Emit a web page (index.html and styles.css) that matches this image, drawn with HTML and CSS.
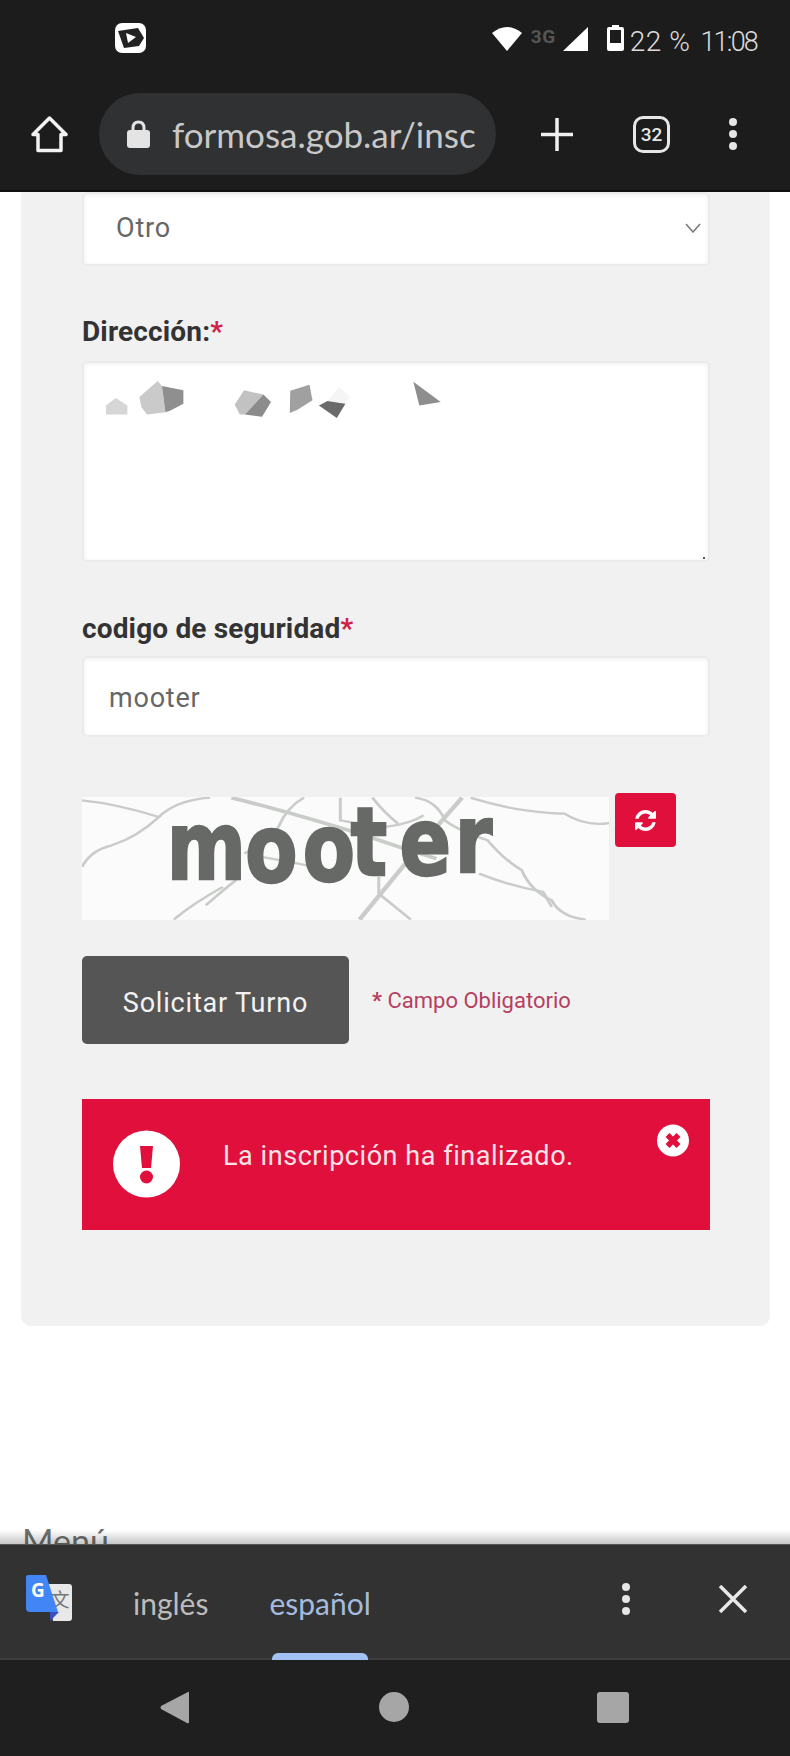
FILE: index.html
```html
<!DOCTYPE html>
<html lang="es">
<head>
    <meta charset="UTF-8">
    <meta name="viewport" content="width=device-width, initial-scale=1.0">
    <title>Solicitar Turno</title>
    <link rel="stylesheet" href="styles.css">
</head>
<body>
    <div class="phone">
        <header class="topbar">
            <div class="status-row">
                <svg class="app-icon" width="31" height="30" viewBox="0 0 31 30">
                    <rect width="31" height="30" rx="7" fill="#fff"/>
                    <path d="M3 8 L23 5 L29 15 L24 23 L9 25 Z" fill="#222"/>
                    <path d="M11 10 L21 14 L13 20 Z" fill="#fff"/>
                </svg>
                <div class="status-right">
                    <svg class="wifi" width="30" height="24" viewBox="0 0 30 24"><path d="M0 6 Q15 -6 30 6 L15 24 Z" fill="#fff"/></svg>
                    <span class="net">3G</span>
                    <svg class="signal" width="25" height="24" viewBox="0 0 25 24"><path d="M0 24 L25 0 V24 Z" fill="#fff"/></svg>
                    <svg class="battery" width="17" height="26" viewBox="0 0 17 26">
                        <path d="M5 0 H12 V2 H15 Q17 2 17 4 V24 Q17 26 15 26 H2 Q0 26 0 24 V4 Q0 2 2 2 H5 Z" fill="#fff"/>
                        <rect x="3" y="5" width="11" height="13" fill="#1c1c1c"/>
                    </svg>
                    <span class="status-text">22 %</span>
                    <span class="status-text clock">11:08</span>
                </div>
            </div>
            <div class="url-row">
                <svg class="home" width="37" height="37" viewBox="0 0 37 37">
                    <path d="M18.500 2 L35 18.500 H30 V34.500 H7 V18.500 H2 Z" fill="none" stroke="#f2f2f2" stroke-width="3.500" stroke-linejoin="round"/>
                </svg>
                <div class="url-pill">
                    <svg width="23" height="28" viewBox="0 0 23 28">
                        <path d="M6 12 V8 Q6 2 11.500 2 Q17 2 17 8 V12" fill="none" stroke="#e4e4e4" stroke-width="3"/>
                        <rect y="10" width="23" height="18" rx="3" fill="#e4e4e4"/>
                    </svg>
                    <span class="url-text">formosa.gob.ar/insc</span>
                </div>
                <svg class="plus" width="32" height="33" viewBox="0 0 32 33">
                    <path d="M16 0 V33 M0 16.500 H32" stroke="#f0f0f0" stroke-width="3.500"/>
                </svg>
                <div class="tabs-count">32</div>
                <div class="dots">
                    <span></span><span></span><span></span>
                </div>
            </div>
        </header>

        <main class="page">
            <section class="panel">
                <div class="field-box select-box">
                    <span>Otro</span>
                    <svg width="16" height="10" viewBox="0 0 16 10"><path d="M1 1 L8 9 L15 1" fill="none" stroke="#777" stroke-width="1.500"/></svg>
                </div>

                <div class="field-label label-address">Dirección:<span class="req">*</span></div>
                <div class="field-box textarea-box">
                    <!-- blotches over the address in the screenshot -->
                    <svg width="342" height="39" viewBox="100 240 800 115" preserveAspectRatio="none">
                        <polygon points="107,342 107,315 130,293 157,315 157,342" fill="#d6d6d6"/>
                        <polygon points="185,290 228,243 238,258 246,335 203,342 190,320" fill="#cacaca"/>
                        <polygon points="238,258 288,270 288,310 258,330 246,335" fill="#8f8f8f"/>
                        <polygon points="430,270 475,283 432,342 420,342 408,312" fill="#c2c2c2"/>
                        <polygon points="475,283 493,305 472,348 432,342" fill="#8c8c8c"/>
                        <polygon points="538,272 583,254 590,300 555,328 537,337" fill="#a0a0a0"/>
                        <polygon points="652,260 678,290 665,308 625,302" fill="#f5f5f5"/>
                        <polygon points="605,315 625,302 667,310 647,352" fill="#6a6a6a"/>
                        <polygon points="826,245 890,305 840,315" fill="#8e8e8e"/>
                    </svg>
                </div>

                <div class="field-label label-code">codigo de seguridad<span class="req">*</span></div>
                <div class="field-box input-box">mooter</div>

                <div class="captcha-row">
                    <svg class="captcha" width="527" height="123" viewBox="0 0 527 123">
                        <rect width="527" height="123" fill="#fafbfa"/>
                        <g transform="scale(.427 .333) translate(-50 -590)" fill="none" stroke="#c9ccc9" stroke-width="7">
                            <path d="M50 600 Q130 610 230 650 Q180 710 120 735 Q70 750 50 800"/>
                            <path d="M230 650 Q270 600 350 592"/>
                            <path d="M400 592 Q520 630 700 700 Q790 740 880 775" stroke-width="11"/>
                            <path d="M570 592 Q530 620 510 680 Q490 720 430 760"/>
                            <path d="M655 592 V660 Q700 670 760 680 Q820 670 850 645"/>
                            <path d="M730 592 Q760 640 790 670"/>
                            <path d="M830 592 Q880 600 900 660 Q930 690 1000 720 Q1040 780 1080 810 Q1100 870 1150 900 Q1170 950 1230 958"/>
                            <path d="M940 592 L880 680" stroke-width="11"/>
                            <path d="M960 592 Q1030 620 1090 630 Q1150 640 1180 640 Q1230 680 1285 668"/>
                            <path d="M820 770 L700 958" stroke-width="11"/>
                            <path d="M745 880 L820 958"/>
                            <path d="M745 830 V880"/>
                            <path d="M980 820 Q1060 860 1130 875 L1150 920"/>
                            <path d="M420 830 Q380 870 340 915 M380 860 Q310 910 265 958"/>
                            <path d="M470 770 Q560 790 630 810"/>
                        </g>
                        <text class="captcha-text" transform="scale(.8 1)" x="106 204 276 336 397 466" y="82 85 84 78 78 75">mooter</text>
                    </svg>
                    <div class="refresh-btn">
                        <svg width="21" height="21" viewBox="0 0 1536 1536">
                            <path fill="#fff" d="M1511 928q0 5-1 7-64 268-268 434.500t-478 166.500q-146 0-282.500-55t-243.500-157l-129 129q-19 19-45 19t-45-19-19-45v-448q0-26 19-45t45-19h448q26 0 45 19t19 45-19 45l-137 137q71 66 161 102t187 36q134 0 250-65t186-179q11-17 53-117 8-23 30-23h192q13 0 22.500 9.500t9.500 22.500zm25-800v448q0 26-19 45t-45 19h-448q-26 0-45-19t-19-45 19-45l138-138q-148-137-349-137-134 0-250 65t-186 179q-11 17-53 117-8 23-30 23h-199q-13 0-22.500-9.500t-9.500-22.500v-7q65-268 270-434.500t480-166.500q146 0 284 55.500t245 156.500l130-129q19-19 45-19t45 19 19 45z"/>
                        </svg>
                    </div>
                </div>

                <div class="submit-row">
                    <button class="submit-btn" type="button">Solicitar Turno</button>
                    <span class="required-note"><b>*</b> Campo Obligatorio</span>
                </div>

                <div class="alert">
                    <svg class="alert-icon" width="67" height="68" viewBox="0 0 67 68">
                        <circle cx="33.500" cy="34" r="33.500" fill="#fff"/>
                        <path d="M27 16 H40 L38 38 H29 Z" fill="#e00f3c"/>
                        <circle cx="33.500" cy="47" r="6.500" fill="#e00f3c"/>
                    </svg>
                    <span class="alert-text">La inscripción ha finalizado.</span>
                    <svg class="alert-close" width="32" height="33" viewBox="0 0 32 33">
                        <circle cx="16" cy="16.500" r="16" fill="#fff"/>
                        <path d="M10.500 11 L21.500 22 M21.500 11 L10.500 22" stroke="#e00f3c" stroke-width="5.500"/>
                    </svg>
                </div>
            </section>

            <div class="menu-title">Menú</div>
            <div class="bar-shadow"></div>
        </main>

        <div class="translate-bar">
            <svg class="gt-icon" width="46" height="46" viewBox="0 0 46 46">
                <path d="M22 9 H43 Q46 9 46 12 V43 Q46 46 43 46 H27 Z" fill="#e8e8e8"/>
                <text class="gt-zh" x="34" y="32">文</text>
                <path d="M24 37 H33 L24 46 Z" fill="#3a4fc0"/>
                <path d="M0 2 Q0 0 2 0 H20 L32 37 H4 Q0 37 0 33 Z" fill="#4285f4"/>
                <text class="gt-g" x="12" y="22">G</text>
            </svg>
            <span class="lang">inglés</span>
            <span class="lang lang-active">español</span>
            <div class="dots dots-translate">
                <span></span><span></span><span></span>
            </div>
            <svg class="close" width="30" height="28" viewBox="0 0 30 28">
                <path d="M2 1 L28 27 M28 1 L2 27" stroke="#e8e8e8" stroke-width="3.500"/>
            </svg>
        </div>

        <nav class="navbar">
            <svg width="29" height="33" viewBox="0 0 29 33"><path d="M28 1 Q29 0 29 2 V31 Q29 33 27 32 L1 18 Q0 16.500 1 15 Z" fill="#a6a6a6"/></svg>
            <svg class="nav-home" width="30" height="30" viewBox="0 0 30 30"><circle cx="15" cy="15" r="15" fill="#a6a6a6"/></svg>
            <svg width="32" height="31" viewBox="0 0 32 31"><rect width="32" height="31" rx="3" fill="#a6a6a6"/></svg>
        </nav>
    </div>
</body>
</html>
```

FILE: styles.css
```css
:root {
    --bar-dark: #1c1c1c;
    --panel-bg: #f1f1f1;
    --red: #e00f3c;
    --label-color: #333;
    --field-text: #666;
}

* {
    box-sizing: border-box;
}

body {
    margin: 0;
    background: #fff;
    font-family: Roboto, Arial, sans-serif;
}

.phone {
    width: 790px;
    height: 1756px;
    display: flex;
    flex-direction: column;
    overflow: hidden;
}

/* top bar */
.topbar {
    height: 192px;
    flex: none;
    background: var(--bar-dark);
    border-bottom: 2px solid #111;
}

.status-row {
    height: 93px;
    display: flex;
    justify-content: space-between;
    padding: 23px 33px 0 115px;
}

.status-right {
    display: flex;
    align-items: flex-start;
    color: #ddd;
}

.wifi {
    margin-top: 4px;
}

.net {
    margin: 2px 0 0 9px;
    width: 27px;
    font-size: 19px;
    font-weight: 700;
    letter-spacing: 0.5px;
    color: #555;
}

.signal {
    margin: 4px 0 0 5px;
}

.battery {
    margin: 2px 0 0 19px;
}

.status-text {
    margin: 2px 0 0 6px;
    font-size: 28px;
    line-height: 34px;
    font-weight: 300;
    letter-spacing: 0.5px;
}

.clock {
    margin-left: 10px;
    font-size: 27px;
    letter-spacing: -1.8px;
}

.url-row {
    display: flex;
    align-items: center;
    height: 82px;
    padding-left: 31px;
}

.url-pill {
    width: 397px;
    height: 82px;
    margin-left: 31px;
    padding-left: 28px;
    display: flex;
    align-items: center;
    background: #2f3133;
    border-radius: 41px;
}

.url-text {
    margin-left: 22px;
    font-family: Lato, sans-serif;
    font-size: 35px;
    color: #c8c8c8;
    white-space: nowrap;
}

.plus {
    margin-left: 45px;
}

.tabs-count {
    width: 37px;
    height: 37px;
    margin-left: 60px;
    border: 3.5px solid #e6e6e6;
    border-radius: 10px;
    display: flex;
    align-items: center;
    justify-content: center;
    font-size: 19px;
    font-weight: 500;
    color: #e6e6e6;
}

.dots {
    display: flex;
    flex-direction: column;
    gap: 4px;
    margin-left: 59px;
}

.dots span {
    width: 8px;
    height: 8px;
    border-radius: 50%;
    background: #e6e6e6;
}

/* page */
.page {
    position: relative;
    flex: 1;
    min-height: 0;
    overflow: hidden;
    background: #fff;
}

.panel {
    margin: 0 20px 0 21px;
    padding: 0 60px 96px 61px;
    background: var(--panel-bg);
    border-radius: 0 0 10px 10px;
}

.field-box {
    width: 628px;
    background: #fff;
    border: 2px solid #ebebeb;
    border-radius: 5px;
    box-shadow: inset 0 1px 4px rgba(0, 0, 0, 0.07);
    color: var(--field-text);
    font-size: 27px;
    letter-spacing: 0.8px;
}

.select-box {
    height: 74px;
    padding: 0 7px 2px 32px;
    display: flex;
    align-items: center;
    justify-content: space-between;
}

.field-label {
    height: 30px;
    font-size: 28px;
    line-height: 30px;
    font-weight: 700;
    letter-spacing: 0.15px;
    color: var(--label-color);
}

.req {
    color: #d02045;
}

.label-address {
    margin: 51px 0 14px;
}

.textarea-box {
    position: relative;
    height: 201px;
    padding: 17px 0 0 19px;
}

.textarea-box svg {
    display: block;
}

.textarea-box::after {
    content: "";
    position: absolute;
    right: 3px;
    bottom: 1px;
    width: 2px;
    height: 2px;
    background: #555;
}

.label-code {
    margin: 52px 0 12px;
}

.input-box {
    height: 81px;
    padding-left: 25px;
    line-height: 81px;
}

.captcha-row {
    display: flex;
    align-items: flex-start;
    gap: 6px;
    margin-top: 56px;
}

.captcha {
    display: block;
    margin-top: 4px;
}

.captcha-text {
    font-family: "DejaVu Sans", sans-serif;
    font-size: 95px;
    font-weight: 700;
    fill: #666966;
    stroke: #666966;
    stroke-width: 2.5px;
}

.refresh-btn {
    width: 61px;
    height: 54px;
    display: flex;
    align-items: center;
    justify-content: center;
    background: var(--red);
    border-radius: 4px;
}

.submit-row {
    display: flex;
    align-items: center;
    margin-top: 36px;
}

.submit-btn {
    width: 267px;
    height: 88px;
    padding-top: 6px;
    border: none;
    border-radius: 5px;
    background: #555;
    color: #f2f2f2;
    font-family: inherit;
    font-size: 27px;
    letter-spacing: 0.8px;
}

.required-note {
    margin-left: 23px;
    font-size: 22px;
    color: #b5405f;
}

.alert {
    position: relative;
    height: 131px;
    margin-top: 55px;
    padding: 31px 0 0 31px;
    display: flex;
    align-items: flex-start;
    background: var(--red);
}

.alert-icon {
    flex: none;
}

.alert-text {
    margin: 10px 0 0 43px;
    font-size: 27px;
    line-height: 32px;
    letter-spacing: 0.55px;
    color: #fbe3e8;
}

.alert-close {
    position: absolute;
    top: 25px;
    right: 21px;
}

.menu-title {
    margin: 193px 0 0 22px;
    font-family: Lato, sans-serif;
    font-size: 34px;
    line-height: 44px;
    color: #707070;
}

.bar-shadow {
    position: absolute;
    left: 0;
    right: 0;
    bottom: 0;
    height: 14px;
    background: linear-gradient(rgba(0, 0, 0, 0), rgba(0, 0, 0, 0.22));
}

/* translate bar */
.translate-bar {
    position: relative;
    flex: none;
    height: 116px;
    display: flex;
    align-items: center;
    padding: 0 0 3px 26px;
    background: #323232;
    border-top: 1px solid #555;
    border-bottom: 2px solid #3e3e3e;
}

.gt-icon {
    margin-top: -5px;
}

.gt-g {
    font-family: "Open Sans", sans-serif;
    font-size: 19px;
    font-weight: 700;
    fill: #fff;
    text-anchor: middle;
}

.gt-zh {
    font-family: "Noto Sans CJK SC", sans-serif;
    font-size: 19px;
    fill: #777;
    text-anchor: middle;
}

.lang {
    margin: 5px 0 0 61px;
    font-family: Lato, sans-serif;
    font-size: 30px;
    color: #bcbcbc;
}

.lang-active {
    position: relative;
    color: #a5bbde;
}

.lang-active::after {
    content: "";
    position: absolute;
    left: 3px;
    right: 3px;
    top: 68px;
    height: 7px;
    background: #a3c1f5;
    border-radius: 6px 6px 0 0;
}

.dots-translate {
    margin-left: auto;
    margin-top: -3px;
}

.close {
    margin: -3px 42px 0 88px;
}

/* android nav */
.navbar {
    height: 96px;
    flex: none;
    display: flex;
    align-items: center;
    background: #1f1f1f;
    padding: 0 161px 2px 160px;
    justify-content: space-between;
}

.nav-home {
    margin-left: 2px;
}
```
